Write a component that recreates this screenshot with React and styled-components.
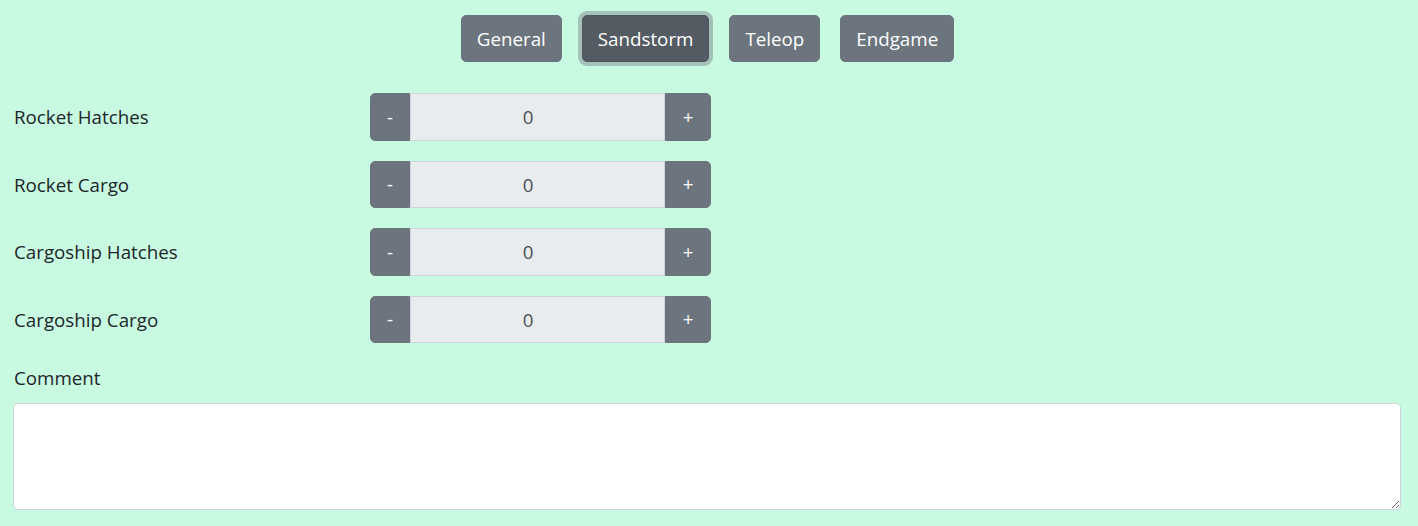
import React, { useState } from "react";
import styled, { createGlobalStyle } from "styled-components";

const GlobalStyle = createGlobalStyle`
  html, body {
    margin: 0;
    padding: 0;
    background: #c8fae2;
  }
  body {
    font-family: "Open Sans", "Noto Sans", "Liberation Sans", sans-serif;
    font-size: 18.75px;
    line-height: 30px;
    color: #212529;
  }
  * { box-sizing: border-box; }
`;

const Page = styled.div`
  padding: 15px 17px 0 13px;
`;

const Tabs = styled.div`
  display: flex;
  justify-content: center;
  gap: 20px;
  margin-bottom: 31px;
  padding-left: 1px;
`;

const TabButton = styled.button`
  font-family: inherit;
  font-size: 18.75px;
  line-height: 30px;
  padding: 7.5px 15px;
  color: #fff;
  background: ${(p) => (p.$active ? "#545b62" : "#6c757d")};
  border: 1px solid ${(p) => (p.$active ? "#4e555b" : "#6c757d")};
  border-radius: 5px;
  box-shadow: ${(p) => (p.$active ? "0 0 0 4px rgba(130, 138, 145, 0.5)" : "none")};
  cursor: pointer;
  outline: none;
`;

const Row = styled.div`
  display: grid;
  grid-template-columns: 357px 341px;
  align-items: center;
  margin-bottom: 20px;
`;

const Label = styled.label`
  padding-left: 1px;
  padding-top: 1px;
`;

const Group = styled.div`
  display: flex;
  height: 47.5px;
`;

const StepButton = styled.button`
  font-family: inherit;
  font-size: 18.75px;
  line-height: 30px;
  padding: 7.5px 0;
  width: ${(p) => (p.$side === "left" ? 40 : 46)}px;
  color: #fff;
  background: #6c757d;
  border: 1px solid #6c757d;
  border-radius: ${(p) => (p.$side === "left" ? "5px 0 0 5px" : "0 5px 5px 0")};
  cursor: pointer;
`;

const Count = styled.input`
  flex: 1;
  min-width: 0;
  font-family: inherit;
  font-size: 18.75px;
  text-align: center;
  color: #495057;
  background: #e9ecef;
  border: 1px solid #ced4da;
  border-radius: 0;
  padding: 7.5px 31px 7.5px 12px;
`;

const CommentLabel = styled.label`
  display: block;
  padding-left: 1px;
  margin-bottom: 10px;
`;

const CommentBox = styled.textarea`
  display: block;
  width: 100%;
  height: 107px;
  font-family: inherit;
  font-size: 18.75px;
  line-height: 30px;
  color: #495057;
  background: #fff;
  border: 1px solid #ced4da;
  border-radius: 5px;
  padding: 7.5px 15px;
`;

const tabs = ["General", "Sandstorm", "Teleop", "Endgame"];
const fields = ["Rocket Hatches", "Rocket Cargo", "Cargoship Hatches", "Cargoship Cargo"];

const App = () => {
  const [tab, setTab] = useState("Sandstorm");
  const [counts, setCounts] = useState(fields.map(() => 0));

  const change = (i, d) => {
    const next = [...counts];
    next[i] = Math.max(0, next[i] + d);
    setCounts(next);
  };

  return (
    <>
      <GlobalStyle />
      <Page>
        <Tabs>
          {tabs.map((t) => (
            <TabButton key={t} $active={t === tab} onClick={() => setTab(t)}>
              {t}
            </TabButton>
          ))}
        </Tabs>
        {fields.map((f, i) => (
          <Row key={f}>
            <Label>{f}</Label>
            <Group>
              <StepButton $side="left" onClick={() => change(i, -1)}>-</StepButton>
              <Count value={counts[i]} readOnly />
              <StepButton $side="right" onClick={() => change(i, 1)}>+</StepButton>
            </Group>
          </Row>
        ))}
        <CommentLabel>Comment</CommentLabel>
        <CommentBox />
      </Page>
    </>
  );
};

export default App;
